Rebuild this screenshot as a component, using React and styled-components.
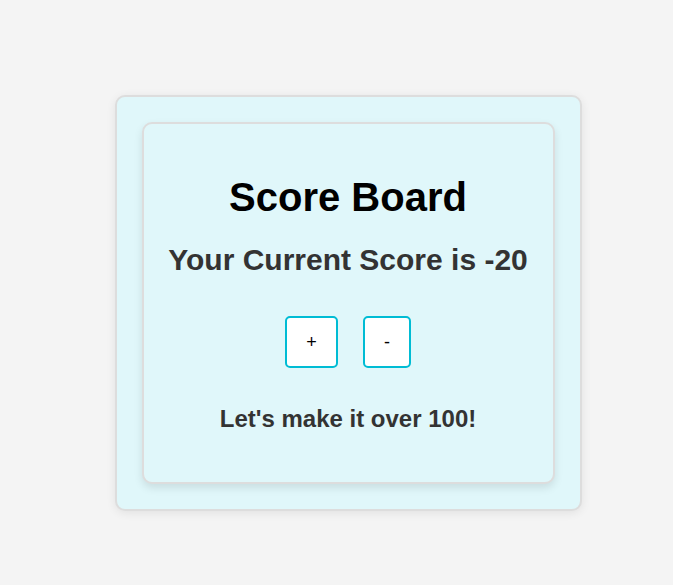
import React, { useState } from 'react'
import styled, { createGlobalStyle } from 'styled-components'

const GlobalStyle = createGlobalStyle`
  *{ box-sizing:border-box; }
  body{
    margin:0;
    background:#f4f4f4;
    font-family:"Liberation Sans", Arial, sans-serif;
  }
`

function App() {
  const [score, setScore] = useState(-20)
  return (
    <Page>
      <GlobalStyle />
      <Outer>
        <Board>
          <Title>Score Board</Title>
          <ScoreText>Your Current Score is {score}</ScoreText>
          <Buttons>
            <CountButton wide onClick={() => setScore(score + 1)}>+</CountButton>
            <CountButton onClick={() => setScore(score - 1)}>-</CountButton>
          </Buttons>
          <Goal>Let's make it over 100!</Goal>
        </Board>
      </Outer>
    </Page>
  )
}

export default App

const Page = styled.div`
  min-height:100vh;
  display:flex;
  justify-content:center;
  align-items:flex-start;
  padding:95px 0 0 23px;
`
const Outer = styled.div`
  width:467px;
  background:#e0f7fa;
  border:2px solid #dddddd;
  border-radius:10px;
  padding:25px;
  box-shadow:0 2px 10px rgba(0,0,0,0.08);
`
const Board = styled.div`
  background:#e0f7fa;
  border:2px solid #dddddd;
  border-radius:10px;
  padding:25px 10px 49px;
  text-align:center;
  box-shadow:0 4px 8px rgba(0,0,0,0.1);
`
const Title = styled.h1`
  font-size:40px;
  font-weight:bold;
  color:#000;
  margin:26px 0 23px;
`
const ScoreText = styled.h2`
  font-size:30px;
  font-weight:bold;
  color:#333;
  margin:0 0 39px;
`
const Buttons = styled.div`
  display:flex;
  justify-content:center;
  gap:25px;
`
const CountButton = styled.button`
  width:${p => (p.wide ? '53px' : '48px')};
  height:52px;
  background:#fff;
  border:2px solid #00bcd4;
  border-radius:5px;
  font-family:"Liberation Sans", Arial, sans-serif;
  font-size:18px;
  color:#000;
  padding:0;
  cursor:pointer;
`
const Goal = styled.p`
  font-size:24px;
  font-weight:bold;
  color:#333;
  margin:37px 0 0;
`
